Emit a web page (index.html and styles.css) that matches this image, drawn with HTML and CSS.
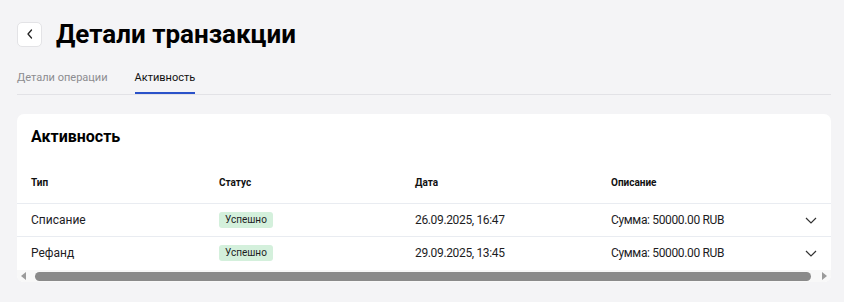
FILE: index.html
```html
<!DOCTYPE html>
<html lang="ru">
<head>
    <meta charset="UTF-8">
    <meta name="viewport" content="width=device-width, initial-scale=1.0">
    <title>Детали транзакции</title>
    <link rel="stylesheet" href="styles.css">
</head>
<body>
    <div class="page">
        <div class="header">
            <button class="back-btn" aria-label="Назад">
                <svg width="8" height="12" viewBox="0 0 8 12"><polyline points="5.5,2 2,6 5.5,10" fill="none" stroke="#222" stroke-width="1.3" stroke-linecap="round" stroke-linejoin="round"/></svg>
            </button>
            <h1>Детали транзакции</h1>
        </div>

        <div class="tabs">
            <div class="tab">Детали операции</div>
            <div class="tab active">Активность</div>
        </div>

        <div class="card">
            <h2>Активность</h2>
            <table>
                <thead>
                    <tr>
                        <th class="col-type">Тип</th>
                        <th class="col-status">Статус</th>
                        <th class="col-date">Дата</th>
                        <th>Описание</th>
                        <th class="col-toggle"></th>
                    </tr>
                </thead>
                <tbody>
                    <tr>
                        <td>Списание</td>
                        <td><span class="badge">Успешно</span></td>
                        <td class="num">26.09.2025, 16:47</td>
                        <td class="num">Сумма: 50000.00 RUB</td>
                        <td class="col-toggle"><svg width="12" height="7" viewBox="0 0 12 7"><polyline points="1,1 6,6 11,1" fill="none" stroke="#333" stroke-width="1.2"/></svg></td>
                    </tr>
                    <tr>
                        <td>Рефанд</td>
                        <td><span class="badge">Успешно</span></td>
                        <td class="num">29.09.2025, 13:45</td>
                        <td class="num">Сумма: 50000.00 RUB</td>
                        <td class="col-toggle"><svg width="12" height="7" viewBox="0 0 12 7"><polyline points="1,1 6,6 11,1" fill="none" stroke="#333" stroke-width="1.2"/></svg></td>
                    </tr>
                </tbody>
            </table>
            <div class="scrollbar">
                <svg class="arrow" width="6" height="8" viewBox="0 0 6 8"><polygon points="5,0 5,8 0,4" fill="#9a9a9a"/></svg>
                <div class="thumb"></div>
                <svg class="arrow" width="6" height="8" viewBox="0 0 6 8"><polygon points="1,0 1,8 6,4" fill="#9a9a9a"/></svg>
            </div>
        </div>
    </div>
</body>
</html>
```

FILE: styles.css
```css
body {
    margin: 0;
    background-color: #f4f4f6;
    font-family: Roboto, "Noto Sans", Arial, sans-serif;
    color: #1d1d1f;
}
.page {
    padding: 21px 13px 0 17px;
}
.header {
    display: flex;
    align-items: center;
    gap: 14px;
}
.back-btn {
    width: 25px;
    height: 25px;
    padding: 0;
    border: 1px solid #e3e3e6;
    border-radius: 5px;
    background-color: white;
    display: flex;
    align-items: center;
    justify-content: center;
    cursor: pointer;
}
h1 {
    margin: 0;
    font-size: 26px;
    font-weight: 700;
    line-height: 26px;
    color: #000;
}
.tabs {
    display: flex;
    gap: 27px;
    margin-top: 23px;
    border-bottom: 1px solid #e2e2e6;
}
.tab {
    font-size: 11px;
    line-height: 16px;
    padding-bottom: 8px;
    color: #8c8c90;
}
.tab.active {
    color: #111;
    box-shadow: inset 0 -2px 0 #2a52c9;
}
.card {
    margin-top: 19px;
    background-color: white;
    border-radius: 7px;
    overflow: hidden;
}
h2 {
    margin: 0;
    padding: 13px 14px 0;
    font-size: 16px;
    font-weight: 700;
    line-height: 20px;
    color: #000;
}
table {
    width: 100%;
    margin-top: 14px;
    border-collapse: collapse;
}
th, td {
    padding: 0 0 0 14px;
    text-align: left;
    white-space: nowrap;
}
th {
    height: 42px;
    font-size: 10px;
    font-weight: 700;
    color: #111;
}
td {
    height: 32px;
    font-size: 12px;
}
td.num {
    letter-spacing: -0.35px;
}
thead tr, tbody tr {
    border-bottom: 1px solid #e9ecf1;
}
tbody tr:last-child {
    border-bottom: none;
}
.col-type {
    width: 174px;
}
.col-status,
.col-date {
    width: 182px;
}
.col-toggle {
    width: 26px;
    padding: 0 14px 0 0;
    text-align: right;
}
.col-toggle svg {
    display: block;
    margin-left: auto;
}
.badge {
    display: inline-block;
    padding: 0 6px;
    height: 16px;
    line-height: 16px;
    border-radius: 3px;
    background-color: #d4f0dc;
    font-size: 10px;
    color: #1d1d1f;
}
.scrollbar {
    display: flex;
    align-items: center;
    height: 12px;
    margin-top: 1px;
    padding: 0 4px;
    background-color: #f8f8f8;
}
.thumb {
    flex: 1;
    height: 9px;
    margin: 0 10px 0 8px;
    border-radius: 5px;
    background-color: #8a8a8a;
}
```
